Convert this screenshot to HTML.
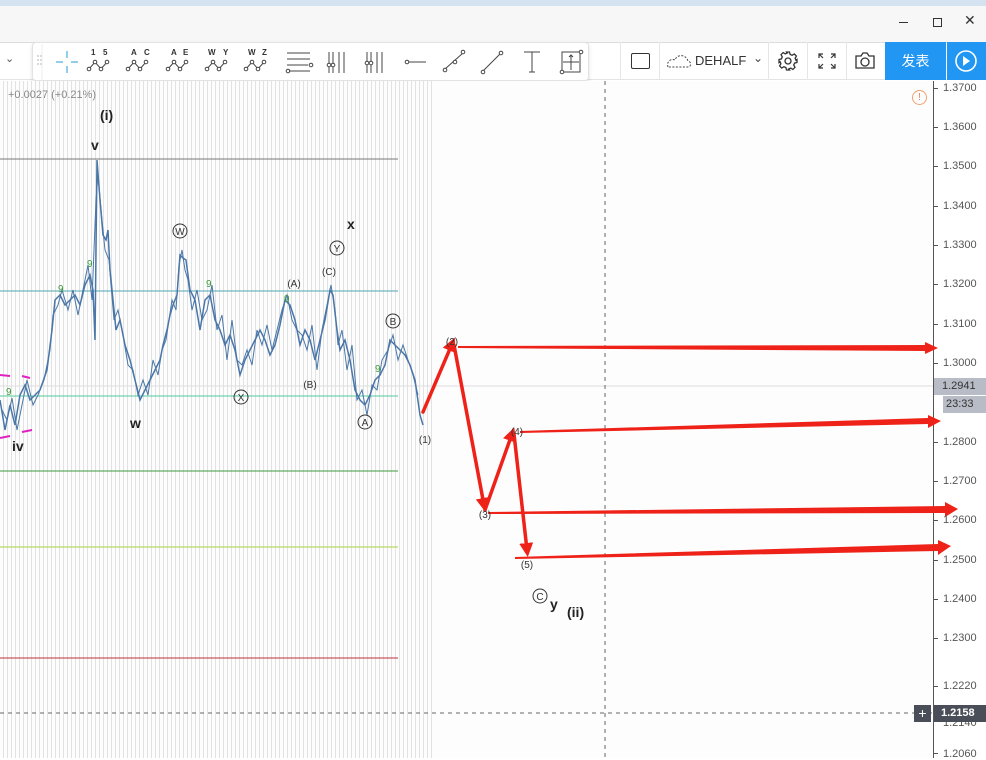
<!DOCTYPE html>
<html><head><meta charset="utf-8"><style>
*{margin:0;padding:0;box-sizing:border-box}
body{width:986px;height:758px;overflow:hidden;background:#fff;font-family:"Liberation Sans","Noto Sans CJK SC",sans-serif;position:relative}
.top{position:absolute;left:0;top:0;width:986px;height:6px;background:#d5e3f0}
.title{position:absolute;left:0;top:6px;width:986px;height:36px;background:#f7f7f7}
.bar{position:absolute;left:0;top:42px;width:986px;height:38px;background:#fff;border-top:1px solid #ddd;border-bottom:1px solid #e4e4e4}
.chart{position:absolute;left:0;top:81px;width:933px;height:677px;background:#fdfdfd}
.stripes{position:absolute;left:0;top:81px;width:432px;height:677px;background:repeating-linear-gradient(90deg,#fdfdfd 0,#fdfdfd 3px,#e2e2e2 3px,#e2e2e2 4px)}
.axis{position:absolute;left:933px;top:81px;width:53px;height:677px;background:#fff;border-left:1px solid #555}
.pl{position:absolute;left:943px;font-size:11px;color:#555}
.tick{position:absolute;left:934px;width:4px;height:1px;background:#555}
.tb{position:absolute;left:32px;top:42px;height:39px;width:557px;background:#fff;border:1px solid #e2e2e2;border-radius:4px;box-shadow:0 2px 4px rgba(0,0,0,.12)}
.sep{position:absolute;top:42px;width:1px;height:38px;background:#e6e6e6}
</style></head><body>
<div class="top"></div>
<div class="title">
<div style="position:absolute;left:899px;top:16px;width:9px;height:1px;background:#333"></div>
<div style="position:absolute;left:933px;top:12px;width:9px;height:9px;border:1px solid #333"></div>
<div style="position:absolute;left:964px;top:6px;font-size:14px;color:#333">✕</div>
</div>
<div class="bar"></div>
<div style="position:absolute;left:5px;top:52px;font-size:11px;color:#555">⌄</div>
<div class="tb">
<svg width="557" height="39" viewBox="0 0 557 39" fill="none" stroke="#444" stroke-width="1">
<g fill="#ccc" stroke="none"><circle cx="5" cy="13" r="1"/><circle cx="8" cy="13" r="1"/><circle cx="5" cy="17" r="1"/><circle cx="8" cy="17" r="1"/><circle cx="5" cy="21" r="1"/><circle cx="8" cy="21" r="1"/></g>
<line x1="9" y1="1" x2="9" y2="38" stroke="#eee"/>
<g stroke="#2a9bd6"><line x1="34" y1="8" x2="34" y2="15"/><line x1="34" y1="23" x2="34" y2="30"/><line x1="23" y1="19" x2="30" y2="19"/><line x1="38" y1="19" x2="45" y2="19"/></g>
<g id="w"><polyline points="56,26 62,19 68,26 74,19"/><circle cx="56" cy="26" r="1.8" fill="#fff"/><circle cx="62" cy="19" r="1.8" fill="#fff"/><circle cx="68" cy="26" r="1.8" fill="#fff"/><circle cx="74" cy="19" r="1.8" fill="#fff"/></g>
<use href="#w" x="39"/><use href="#w" x="79"/><use href="#w" x="118"/><use href="#w" x="157"/>
<g font-size="8" fill="#333" stroke="none" font-family="Liberation Sans" font-weight="bold"><text x="58" y="12">1</text><text x="70" y="12">5</text><text x="98" y="12">A</text><text x="111" y="12">C</text><text x="138" y="12">A</text><text x="150" y="12">E</text><text x="175" y="12">W</text><text x="190" y="12">Y</text><text x="215" y="12">W</text><text x="229" y="12">Z</text></g>
<line x1="254" y1="10" x2="277" y2="10"/><line x1="254" y1="16" x2="277" y2="16"/><line x1="254" y1="22" x2="275" y2="22"/><line x1="256" y1="28" x2="277" y2="28"/><circle cx="278" cy="22" r="1.8"/><circle cx="255" cy="28" r="1.8"/>
<g><line x1="296" y1="9" x2="296" y2="30"/><line x1="300" y1="9" x2="300" y2="30"/><line x1="306" y1="9" x2="306" y2="30"/><line x1="311" y1="9" x2="311" y2="30"/><circle cx="296" cy="22" r="1.8" fill="#fff"/><circle cx="300" cy="22" r="1.8" fill="#fff"/></g>
<g transform="translate(38 0)"><line x1="296" y1="9" x2="296" y2="30"/><line x1="300" y1="9" x2="300" y2="30"/><line x1="306" y1="9" x2="306" y2="30"/><line x1="311" y1="9" x2="311" y2="30"/><circle cx="296" cy="20" r="1.8" fill="#fff"/><circle cx="300" cy="20" r="1.8" fill="#fff"/></g>
<circle cx="374" cy="19" r="1.8"/><line x1="376" y1="19" x2="393" y2="19"/>
<line x1="412" y1="26" x2="430" y2="10"/><circle cx="412" cy="27" r="1.8" fill="#fff"/><circle cx="430" cy="9" r="1.8" fill="#fff"/><circle cx="422" cy="19" r="1.8" fill="#fff"/>
<line x1="450" y1="28" x2="467" y2="11"/><circle cx="450" cy="29" r="1.8" fill="#fff"/><circle cx="468" cy="10" r="1.8" fill="#fff"/>
<path d="M491 9h16M499 9v20M496 29h6"/>
<rect x="529" y="9" width="18" height="20"/><path d="M530 19h16M538 12v15M536 14l2-2 2 2"/><circle cx="548" cy="9" r="1.8" fill="#fff"/><circle cx="529" cy="29" r="1.8" fill="#fff"/>
</svg>
</div>
<div class="sep" style="left:620px"></div><div class="sep" style="left:659px"></div><div class="sep" style="left:768px"></div><div class="sep" style="left:807px"></div><div class="sep" style="left:846px"></div>
<div style="position:absolute;left:631px;top:53px;width:19px;height:16px;border:1.3px solid #333;border-radius:2px"></div>
<svg style="position:absolute;left:666px;top:52px" width="26" height="18"><path d="M2 15 C0 10 5 6 9 8 C11 2 20 2 22 9 C26 10 25 15 22 15 Z" fill="none" stroke="#444" stroke-dasharray="2 1.5"/></svg>
<div style="position:absolute;left:695px;top:53px;font-size:13px;color:#333">DEHALF</div>
<div style="position:absolute;left:753px;top:51px;font-size:12px;color:#444">⌄</div>
<svg style="position:absolute;left:777px;top:50px" width="22" height="22" fill="none" stroke="#333" stroke-width="1.3"><circle cx="11" cy="11" r="3"/><path d="M9.5 2h3l.6 2.4 2 .9 2.2-1.3 2.1 2.1-1.3 2.2.9 2L20 9.5v3l-2.4.6-.9 2 1.3 2.2-2.1 2.1-2.2-1.3-2 .9L12.5 20h-3l-.6-2.4-2-.9-2.2 1.3-2.1-2.1 1.3-2.2-.9-2L2 12.5v-3l2.4-.6.9-2-1.3-2.2 2.1-2.1 2.2 1.3 2-.9z"/></svg>
<svg style="position:absolute;left:817px;top:52px" width="20" height="18" fill="none" stroke="#333" stroke-width="1.2"><path d="M2 6V2h4M2 2l4 4M18 6V2h-4M18 2l-4 4M2 12v4h4M2 16l4-4M18 12v4h-4M18 16l-4-4"/></svg>
<svg style="position:absolute;left:854px;top:51px" width="22" height="19" fill="none" stroke="#333" stroke-width="1.3"><path d="M2 5h5l2-3h4l2 3h5v12H2z"/><circle cx="11" cy="11" r="4"/></svg>
<div style="position:absolute;left:885px;top:42px;width:61px;height:38px;background:#2196f3;color:#fff;font-size:14px;line-height:38px;text-align:center">发表</div>
<div style="position:absolute;left:947px;top:42px;width:39px;height:38px;background:#2196f3"><svg width="39" height="38"><circle cx="19" cy="19" r="10" fill="none" stroke="#fff" stroke-width="1.6"/><path d="M16 14l7 5-7 5z" fill="#fff"/></svg></div>

<div class="chart"></div>
<div class="stripes"></div>
<div class="axis"></div>
<div style="position:absolute;left:912px;top:90px;width:15px;height:15px;border:1.3px solid #f0a070;border-radius:50%;color:#f08050;font-size:10px;text-align:center;line-height:13px">!</div>
<div style="position:absolute;left:8px;top:89px;font-size:11px;color:#888">+0.0027 (+0.21%)</div>

<svg style="position:absolute;left:0;top:0" width="986" height="758">
<defs><marker id="ah" markerWidth="4" markerHeight="4" refX="2" refY="2" orient="auto"><path d="M0 0L4 2L0 4z" fill="#ee2218"/></marker></defs>
<line x1="0" y1="159" x2="398" y2="159" stroke="#777"/>
<line x1="0" y1="291" x2="398" y2="291" stroke="#4aa7b3"/>
<line x1="0" y1="396" x2="398" y2="396" stroke="#4ecb9f"/>
<line x1="0" y1="471" x2="398" y2="471" stroke="#3a9a3a"/>
<line x1="0" y1="547" x2="398" y2="547" stroke="#a8d040"/>
<line x1="0" y1="658" x2="398" y2="658" stroke="#c0303a"/>
<line x1="0" y1="386" x2="933" y2="386" stroke="#ddd"/>
<line x1="605" y1="81" x2="605" y2="758" stroke="#666" stroke-dasharray="4 4"/>
<line x1="0" y1="713" x2="933" y2="713" stroke="#666" stroke-dasharray="4 4"/>
<g fill="none" stroke="#4a76a8" stroke-width="1.5">
<polyline points="0,400 5,430 10,405 15,425 20,395 25,385 30,400 40,390 47,370 52,330 55,300 60,295 65,305 70,300 75,295 80,305 85,285 90,275 93,290 95,340 97,160 100,200 103,235 106,240 108,230 110,270 112,290 116,330 120,320 125,345 130,360 135,380 140,400 145,390 150,380 155,370 160,360 163,345 167,330 170,315 173,305 177,295 180,255 183,258 186,260 190,290 195,300 200,330 205,300 210,295 215,320 220,330 225,345 230,335 235,350 240,375 245,360 250,350 255,340 260,330 265,340 270,355 275,345 280,325 285,300 290,305 295,320 300,345 305,330 310,340 315,360 320,340 325,320 330,290 333,295 337,330 340,350 345,340 350,360 355,390 360,400 365,405 370,395 375,380 380,375 385,365 390,340 395,345 400,350 405,355 410,365 415,380 420,415 423,425"/>
<polyline stroke-width="1" points="2,410 7,420 12,398 17,430 22,405 27,380 33,405 38,395 44,380 50,350 53,315 58,305 62,290 68,310 73,290 78,315 83,290 88,265 92,300 96,200 98,175 102,220 105,250 109,260 111,285 114,320 118,310 123,335 128,365 133,370 138,395 143,380 148,395 153,360 158,375 162,350 166,340 169,320 172,300 176,310 179,265 182,250 185,270 188,280 192,310 197,290 202,320 207,310 212,285 217,330 222,315 227,360 232,320 237,360 242,365 247,350 252,365 257,330 262,345 267,325 272,350 277,330 282,310 287,295 292,320 297,330 302,335 307,350 312,325 317,370 322,330 327,305 331,285 335,310 338,345 342,330 347,370 352,345 357,400 362,390 367,415 372,385 377,390 382,360 388,350 393,335 398,360 403,345 408,360 413,375 418,395"/>
</g>
<g stroke="#e020c0" stroke-width="2"><line x1="0" y1="375" x2="10" y2="376"/><line x1="22" y1="376" x2="30" y2="378"/><line x1="0" y1="438" x2="10" y2="436"/><line x1="22" y1="432" x2="32" y2="430"/></g>
<g stroke="#ee2218" fill="none" stroke-linecap="round">
<line x1="423" y1="412" x2="452" y2="344" stroke-width="3.5" marker-end="url(#ah)"/>
<line x1="454" y1="345" x2="484" y2="505" stroke-width="3.5" marker-end="url(#ah)"/>
<line x1="485" y1="510" x2="512" y2="434" stroke-width="3.5" marker-end="url(#ah)"/>
<line x1="514" y1="434" x2="527" y2="550" stroke-width="3.5" marker-end="url(#ah)"/>
</g>
<g fill="#ee2218" stroke="none">
<polygon points="458,346 458,348 925,351 925,354 938,348 925,342 925,345"/>
<polygon points="520,431 520,433 928,424 928,428 941,421 928,415 928,418"/>
<polygon points="488,512 488,514 945,513 945,517 958,509 945,502 945,506"/>
<polygon points="515,557 515,559 938,551 938,555 951,546 938,540 938,544"/>
</g>
<g fill="none" stroke="#333"><circle cx="180" cy="231" r="7"/><circle cx="337" cy="248" r="7"/><circle cx="241" cy="397" r="7"/><circle cx="393" cy="321" r="7"/><circle cx="365" cy="422" r="7"/><circle cx="540" cy="596" r="7"/></g>
<g font-size="10" fill="#333" text-anchor="middle" font-family="Liberation Sans"><text x="180" y="235">W</text><text x="337" y="252">Y</text><text x="241" y="401">X</text><text x="393" y="325">B</text><text x="365" y="426">A</text><text x="540" y="600">C</text>
<text x="294" y="287">(A)</text><text x="310" y="388">(B)</text><text x="329" y="275">(C)</text><text x="425" y="443">(1)</text><text x="452" y="345">(2)</text><text x="485" y="518">(3)</text><text x="517" y="435">(4)</text><text x="527" y="568">(5)</text></g>
<g font-size="10" fill="#3a9a3a" font-family="Liberation Sans"><text x="58" y="292">9</text><text x="87" y="267">9</text><text x="206" y="287">9</text><text x="284" y="302">9</text><text x="375" y="372">9</text><text x="6" y="395">9</text></g>
<g font-size="14" font-weight="bold" fill="#222" font-family="Liberation Sans"><text x="100" y="120">(i)</text><text x="91" y="150">v</text><text x="347" y="229">x</text><text x="130" y="428">w</text><text x="12" y="451">iv</text><text x="550" y="609">y</text><text x="567" y="617">(ii)</text></g>
</svg>

<div class="tick" style="top:88px"></div><div class="pl" style="top:82px">1.3700</div>
<div class="tick" style="top:127px"></div><div class="pl" style="top:121px">1.3600</div>
<div class="tick" style="top:166px"></div><div class="pl" style="top:160px">1.3500</div>
<div class="tick" style="top:206px"></div><div class="pl" style="top:200px">1.3400</div>
<div class="tick" style="top:245px"></div><div class="pl" style="top:239px">1.3300</div>
<div class="tick" style="top:284px"></div><div class="pl" style="top:278px">1.3200</div>
<div class="tick" style="top:324px"></div><div class="pl" style="top:318px">1.3100</div>
<div class="tick" style="top:363px"></div><div class="pl" style="top:357px">1.3000</div>
<div style="position:absolute;left:934px;top:378px;width:52px;height:17px;background:#b8bcc6;font-size:11px;color:#333;padding-left:8px;line-height:17px">1.2941</div>
<div style="position:absolute;left:943px;top:396px;width:43px;height:17px;background:#b8bcc6;font-size:11px;color:#333;padding-left:3px;line-height:17px">23:33</div>
<div class="tick" style="top:442px"></div><div class="pl" style="top:436px">1.2800</div>
<div class="tick" style="top:481px"></div><div class="pl" style="top:475px">1.2700</div>
<div class="tick" style="top:520px"></div><div class="pl" style="top:514px">1.2600</div>
<div class="tick" style="top:560px"></div><div class="pl" style="top:554px">1.2500</div>
<div class="tick" style="top:599px"></div><div class="pl" style="top:593px">1.2400</div>
<div class="tick" style="top:638px"></div><div class="pl" style="top:632px">1.2300</div>
<div class="tick" style="top:686px"></div><div class="pl" style="top:680px">1.2220</div>
<div class="pl" style="top:717px">1.2140</div>
<div style="position:absolute;left:914px;top:705px;width:17px;height:17px;background:#4a4e58;color:#fff;font-size:14px;text-align:center;line-height:17px">+</div>
<div style="position:absolute;left:934px;top:705px;width:52px;height:17px;background:#4a4e58;font-size:11px;font-weight:bold;color:#fff;padding-left:7px;line-height:17px">1.2158</div>
<div class="tick" style="top:753px"></div><div class="pl" style="top:748px">1.2060</div>
</body></html>
